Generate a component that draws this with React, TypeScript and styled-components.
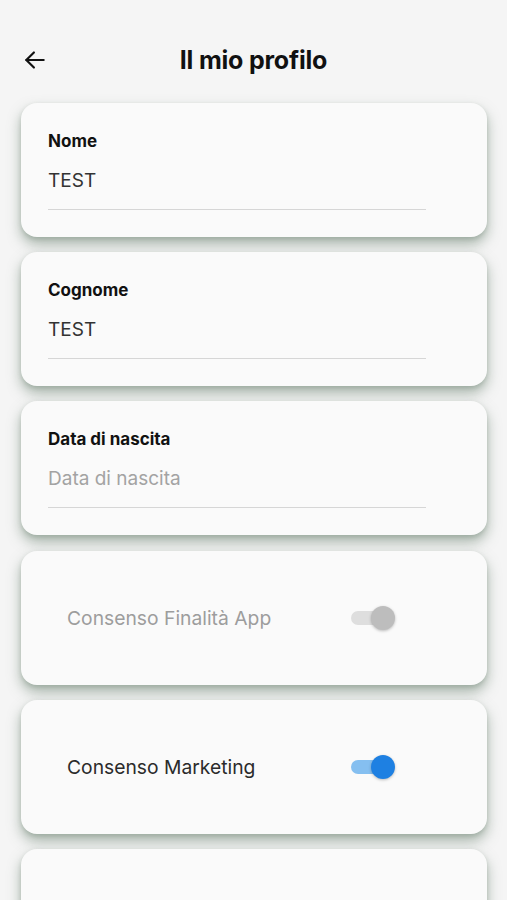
import React from "react";
import styled, { createGlobalStyle } from "styled-components";

const Global = createGlobalStyle`
  html, body { margin: 0; padding: 0; background: #f5f5f5; }
  body { font-family: "Inter", "Roboto", sans-serif; -webkit-font-smoothing: antialiased; }
`;

const Screen = styled.div`
  width: 507px;
  height: 900px;
  overflow: hidden;
  background: #f5f5f5;
  display: flex;
  flex-direction: column;
`;

const Header = styled.header`
  flex: none;
  height: 103px;
  padding-top: 38px;
  box-sizing: border-box;
  display: grid;
  grid-template-columns: 70px 1fr 70px;
  align-items: start;
`;

const BackButton = styled.button`
  height: 44px;
  border: 0;
  background: transparent;
  padding: 0 0 0 22px;
  display: flex;
  align-items: center;
  cursor: pointer;
`;

const Title = styled.h1`
  margin: 0;
  height: 44px;
  line-height: 44px;
  text-align: center;
  font-size: 25px;
  font-weight: 700;
  color: #111;
  letter-spacing: -0.2px;
`;

const List = styled.div`
  flex: none;
  display: flex;
  flex-direction: column;
  gap: 15.2px;
  padding: 0 20px 0 21px;
`;

const Card = styled.div<{ $row?: boolean }>`
  flex: none;
  height: 134px;
  box-sizing: border-box;
  background: #fafafa;
  border-radius: 16px;
  box-shadow: 0 7px 13px rgba(90, 115, 95, 0.5), 0 2px 4px rgba(90, 115, 95, 0.2);
  padding: ${(p) => (p.$row ? "0 98px 0 46px" : "28px 61px 0 27px")};
  display: flex;
  flex-direction: ${(p) => (p.$row ? "row" : "column")};
  align-items: ${(p) => (p.$row ? "center" : "stretch")};
  justify-content: ${(p) => (p.$row ? "space-between" : "flex-start")};
`;

const Label = styled.div`
  font-size: 17px;
  line-height: 20px;
  font-weight: 700;
  color: #111;
`;

const Value = styled.div<{ $placeholder?: boolean }>`
  margin-top: 18px;
  padding-bottom: 16px;
  border-bottom: 1px solid #d6d6d6;
  font-size: 19px;
  line-height: 24px;
  color: ${(p) => (p.$placeholder ? "#a3a3a3" : "#333")};
`;

const RowText = styled.span<{ $disabled?: boolean }>`
  font-size: 19.3px;
  color: ${(p) => (p.$disabled ? "#9d9d9d" : "#2b2b2b")};
`;

const Switch = styled.div<{ $on: boolean; $disabled?: boolean }>`
  position: relative;
  width: 38px;
  height: 14px;
  border-radius: 7px;
  margin-top: 1px;
  background: ${(p) => (p.$disabled ? "#dedede" : p.$on ? "#85bff0" : "#ccc")};
`;

const Thumb = styled.div<{ $disabled?: boolean }>`
  position: absolute;
  right: -6px;
  top: -5px;
  width: 24px;
  height: 24px;
  border-radius: 50%;
  background: ${(p) => (p.$disabled ? "#bdbdbd" : "#1e80e2")};
  box-shadow: 0 1px 3px rgba(0, 0, 0, 0.25);
`;

export default function App() {
  return (
    <Screen>
      <Global />
      <Header>
        <BackButton aria-label="Indietro">
          <svg width="26" height="26" viewBox="0 0 24 24" fill="none" stroke="#111" strokeWidth="2" strokeLinecap="round" strokeLinejoin="round">
            <path d="M20 12H4" />
            <path d="M11 5l-7 7 7 7" />
          </svg>
        </BackButton>
        <Title>Il mio profilo</Title>
        <div />
      </Header>
      <List>
        <Card>
          <Label>Nome</Label>
          <Value>TEST</Value>
        </Card>
        <Card>
          <Label>Cognome</Label>
          <Value>TEST</Value>
        </Card>
        <Card>
          <Label>Data di nascita</Label>
          <Value $placeholder>Data di nascita</Value>
        </Card>
        <Card $row>
          <RowText $disabled>Consenso Finalità App</RowText>
          <Switch $on $disabled>
            <Thumb $disabled />
          </Switch>
        </Card>
        <Card $row>
          <RowText>Consenso Marketing</RowText>
          <Switch $on>
            <Thumb />
          </Switch>
        </Card>
        <Card $row />
      </List>
    </Screen>
  );
}
